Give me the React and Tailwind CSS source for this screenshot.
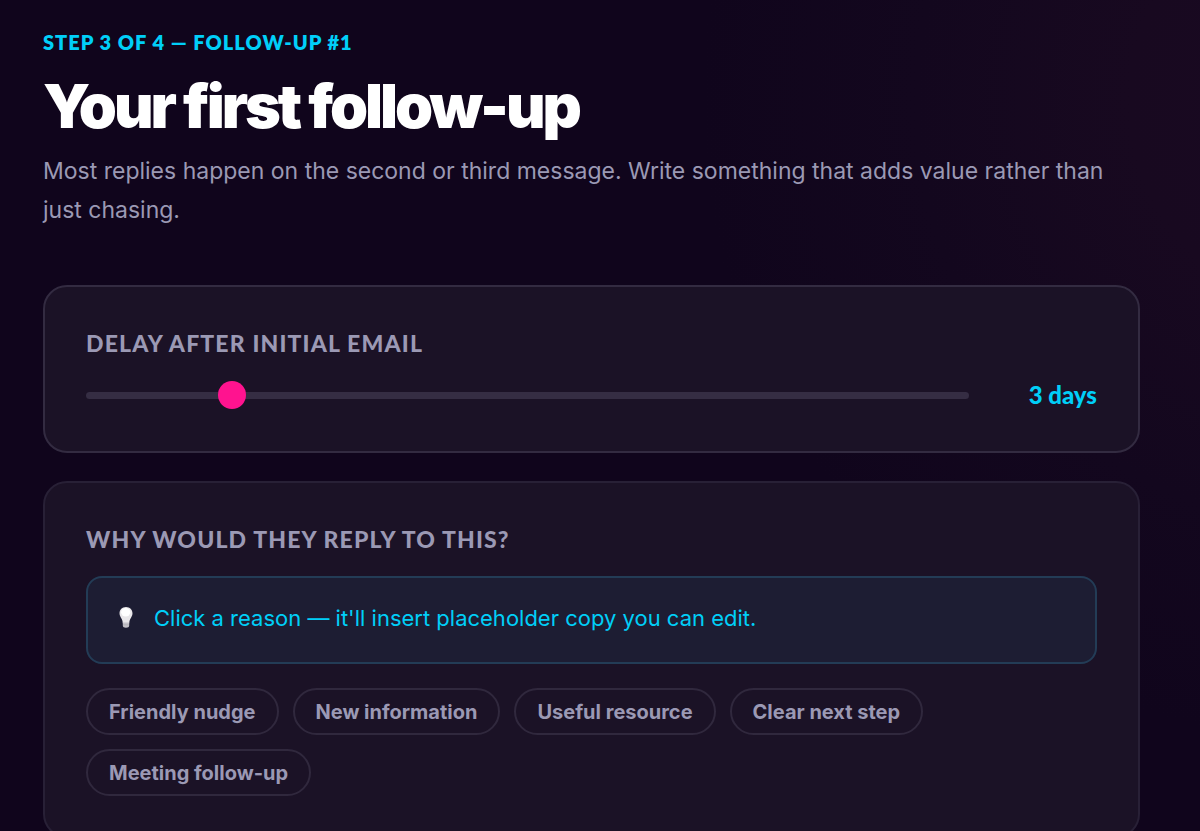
import React, { useState } from "react";

const reasons = [
  "Friendly nudge",
  "New information",
  "Useful resource",
  "Clear next step",
  "Meeting follow-up",
];

function Card({ children, className = "" }) {
  return (
    <section
      className={`rounded-3xl border-2 bg-[#1b1226] px-[41px] ${className}`}
    >
      {children}
    </section>
  );
}

function BulbIcon() {
  return (
    <svg className="h-6 w-4 shrink-0" viewBox="0 0 16 24" aria-hidden="true">
      <path
        d="M8 1C4.200 1 1.500 3.800 1.500 7.300c0 2.400 1.300 3.900 2.200 5.700.6 1.200.9 2.400 1.100 4.200h6.400c.2-1.800.5-3 1.100-4.200.9-1.800 2.200-3.300 2.200-5.700C14.500 3.800 11.800 1 8 1z"
        fill="#e9e7ea"
      />
      <path d="M4.800 16.500h6.400v3c0 1.300-1.200 2.300-3.200 2.300s-3.200-1-3.200-2.300z" fill="#c4c1c8" />
      <path d="M5 18.800h6" stroke="#aaa7b0" strokeWidth="0.600" />
      <ellipse cx="7.700" cy="6.300" rx="4.600" ry="4.200" fill="#ffffff" />
    </svg>
  );
}

export default function App() {
  const [days, setDays] = useState(3);
  const [selected, setSelected] = useState(null);

  return (
    <div className="h-screen overflow-hidden bg-[#10051c] bg-[radial-gradient(circle_at_112%_12%,#1a0922_0%,#180920_14%,#13071e_28%,transparent_42%)] font-['Inter',sans-serif] text-[#9b99b4]">
      <main className="pt-[30px] pr-[60px] pb-10 pl-[43px]">
        {/* Header */}
        <header>
          <p className="font-['Lato',sans-serif] text-xl leading-6 font-extrabold tracking-wider text-[#00cff8] uppercase">
            Step 3 of 4 — Follow-up #1
          </p>
          <h1 className="mt-4 text-[61px] leading-[72px] font-black tracking-tighter text-white">
            Your first follow-up
          </h1>
          <p className="mt-2.5 text-[23px] leading-[39px]">
            Most replies happen on the second or third message. Write something
            that adds value rather than just chasing.
          </p>
        </header>

        {/* Delay */}
        <Card className="mt-[55px] h-[168px] border-[#332b41] pt-10">
          <label
            htmlFor="delay"
            className="block font-['Lato',sans-serif] text-[23px] leading-8 font-black tracking-wider uppercase"
          >
            Delay after initial email
          </label>
          <div className="mt-5 flex items-center justify-between gap-8">
            <input
              id="delay"
              type="range"
              min="1"
              max="14"
              value={days}
              onChange={(e) => setDays(Number(e.target.value))}
              className="h-[7px] min-w-0 flex-1 cursor-pointer appearance-none rounded-full bg-[#352d43] [&::-webkit-slider-thumb]:size-7 [&::-webkit-slider-thumb]:appearance-none [&::-webkit-slider-thumb]:rounded-full [&::-webkit-slider-thumb]:bg-[#ff138f]"
            />
            <output
              htmlFor="delay"
              className="w-24 text-right font-['Lato',sans-serif] text-2xl leading-8 font-black text-[#00cff8]"
            >
              {days} days
            </output>
          </div>
        </Card>

        {/* Reasons */}
        <Card className="mt-7 border-[#282036] pt-10 pb-10">
          <h2 className="font-['Lato',sans-serif] text-[23px] leading-8 font-black tracking-wider uppercase">
            Why would they reply to this?
          </h2>
          <div className="mt-[21px] flex h-[88px] items-center gap-5 rounded-2xl border-2 border-[#233c56] bg-[#1d1d33] px-[30px] pb-1 text-[22px] leading-8 text-[#00cff8]">
            <BulbIcon />
            <p>Click a reason — it'll insert placeholder copy you can edit.</p>
          </div>
          <div className="mt-6 flex flex-wrap gap-3.5">
            {reasons.map((reason) => (
              <button
                key={reason}
                type="button"
                aria-pressed={selected === reason}
                onClick={() => setSelected(reason)}
                className="h-[47px] cursor-pointer rounded-full border-2 border-[#30283d] px-[21px] text-xl leading-7 font-bold aria-pressed:border-[#00cff8]"
              >
                {reason}
              </button>
            ))}
          </div>
        </Card>
      </main>
    </div>
  );
}
